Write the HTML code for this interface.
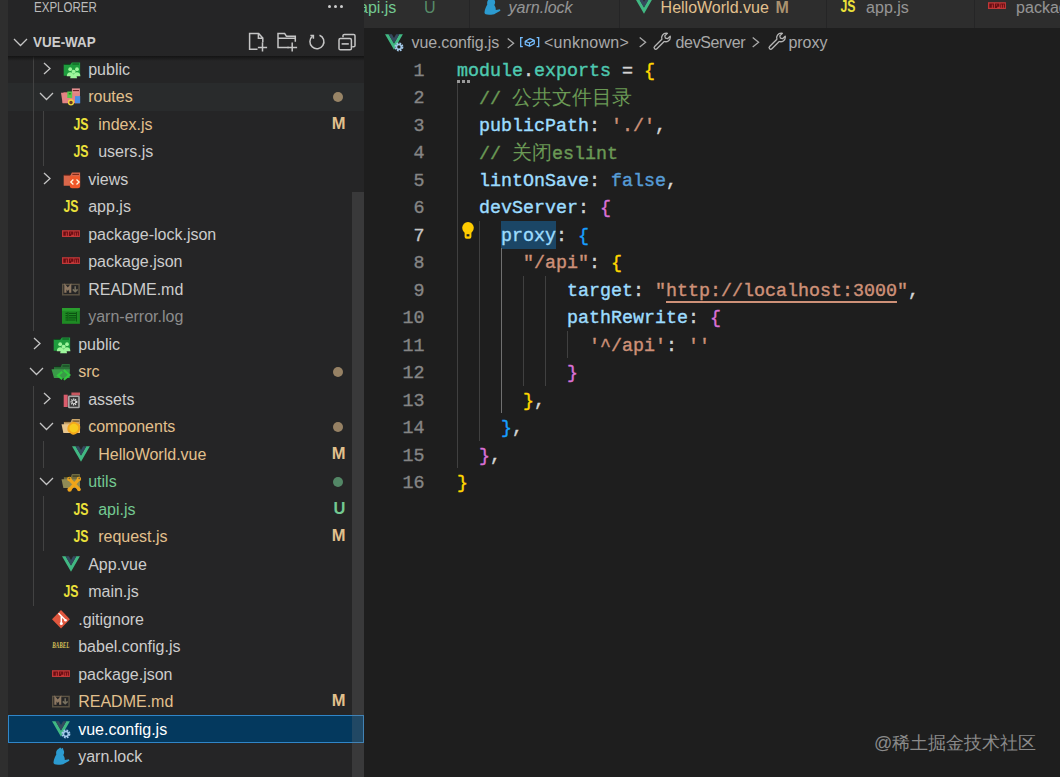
<!DOCTYPE html>
<html><head><meta charset="utf-8">
<style>
*{margin:0;padding:0;box-sizing:border-box}
html,body{width:1060px;height:777px;overflow:hidden;background:#1e1e1e;font-family:"Liberation Sans",sans-serif}
.abs{position:absolute}
#act{left:0;top:0;width:8px;height:777px;background:#2e2e2e}
#side{left:8px;top:0;width:356px;height:777px;background:#252526;overflow:hidden}
.title{left:25.6px;top:-2.4px;font-size:13.75px;color:#bbbbbb;line-height:20px;transform:scaleX(0.84);transform-origin:0 0}
.hdots{left:320.0px;top:4.6px}
.hdots i{position:absolute;top:0;width:3px;height:3px;border-radius:50%;background:#cccccc}
#hdr{left:0;top:28px;width:356px;height:27.5px;background:#252526}
#hdrsh{left:0;top:55.5px;width:356px;height:5px;background:linear-gradient(#141414,rgba(20,20,20,0))}
.hname{left:25.2px;top:0.9px;line-height:27.5px;font-size:14px;font-weight:bold;color:#cccccc;transform:scaleX(0.96);transform-origin:0 0}
.row{position:absolute;left:0;width:356px;height:27.5px;line-height:27.5px;font-size:16px;color:#cccccc;white-space:nowrap}
.row.hov{background:#292b2c}
.row.sel{background:#04395e}
.row.sel::before{content:"";position:absolute;left:0;right:0;top:-0.6px;bottom:-0.3px;border:1.3px solid #3086c8;background:#04395e}
.row.sel .t{color:#ffffff!important}
.row .t{position:absolute;top:0}
.row .b{position:absolute;left:319.5px;top:-0.8px;font-size:16.5px;font-weight:bold;width:18px;text-align:right}
.dot{position:absolute;left:325px;top:8.5px;width:10px;height:10px;border-radius:50%}
.guide{position:absolute;width:1px;background:#585858}
#sbar{left:344px;top:192px;width:12px;height:585px;background:rgba(121,121,121,0.25)}
#editor{left:364px;top:0;width:696px;height:777px;background:#1e1e1e;overflow:hidden}
#tabs{left:0;top:0;width:696px;height:28px;background:#252526}
.tab{position:absolute;top:0;height:28px;background:#2d2d2d;font-size:16px;color:rgba(255,255,255,0.5);white-space:nowrap;overflow:hidden}
.tab .tt{position:absolute;top:-2px;line-height:20px}
#crumbs{left:0;top:29.2px;width:696px;height:27.5px;font-size:16px;color:#a9a9a9;line-height:27.5px;white-space:nowrap}
#crumbs span{position:absolute;top:0}
.ln{position:absolute;left:0;width:60.5px;text-align:right;font-family:"Liberation Mono",monospace;font-size:18.33px;color:#858585;line-height:27.5px;-webkit-text-stroke:0.35px currentColor}
.code{position:absolute;left:93px;font-family:"Liberation Mono",monospace;font-size:18.33px;color:#d4d4d4;white-space:pre;line-height:27.5px;-webkit-text-stroke:0.4px currentColor}
.code u{text-decoration-color:#ce9178;text-underline-offset:5px;text-decoration-thickness:2px;text-decoration-skip-ink:none}
.cjk{font-size:20px;font-weight:300;-webkit-text-stroke:0}
.k{color:#4ec9b0}.p{color:#9cdcfe}.s{color:#ce9178}.c{color:#6a9955}.kw{color:#569cd6}
.b1{color:#ffd700}.b2{color:#da70d6}.b3{color:#179fff}
#wm{left:874px;top:731px;font-size:18px;color:#8a8a8a;white-space:nowrap}
</style></head><body>
<div id="act" class="abs"></div>
<div id="side" class="abs">
  <div class="abs title">EXPLORER</div>
  <div class="abs hdots"><i style="left:0"></i><i style="left:6.1px"></i><i style="left:12.2px"></i></div>
<div class="row" style="top:55.5px"><svg width="9" height="13" viewBox="0 0 9 13" style="position:absolute;left:34.8px;top:6.8px"><path d="M1 1l6 5.5L1 12" fill="none" stroke="#c5c5c5" stroke-width="1.3"/></svg><svg width="20" height="20" viewBox="0 0 20 20" style="position:absolute;left:54px;top:4px;overflow:visible"><path d="M1.7 4.6H8.4L9.9 2.5H18.1V15.8H1.7Z" fill="#1e9c3d"/><path d="M2.2 4.4h6M10.4 4h6.6" stroke="#0b4d1a" stroke-width="0.9"/><g fill="#9df59b"><circle cx="8.2" cy="9.2" r="1.9"/><circle cx="15" cy="9.2" r="1.9"/><circle cx="11.6" cy="11.8" r="2"/><path d="M4.8 16.3c0-2.6 1.5-4 3.4-4s3.4 1.4 3.4 4z"/><path d="M11.6 16.3c0-2.6 1.5-4 3.4-4s3.4 1.4 3.4 4z"/><path d="M8.2 18.3c0-2.6 1.5-4 3.4-4s3.4 1.4 3.4 4z"/></g></svg><span class="t" style="left:80.2px;color:#cccccc">public</span></div>
<div class="row hov" style="top:83.0px"><svg width="15" height="9" viewBox="0 0 15 9" style="position:absolute;left:31.200000000000003px;top:8.8px"><path d="M1 1l6.5 6.5L14 1" fill="none" stroke="#c5c5c5" stroke-width="1.3"/></svg><svg width="20" height="20" viewBox="0 0 20 20" style="position:absolute;left:54px;top:4px;overflow:visible"><path d="M1.5 5.2H9V15.9H0.6Z" fill="#c86a6a"/><path d="M9.9 1.4H17.9V8.5H9.9Z" fill="#e58f8f"/><path d="M10.8 3.6h6.2" stroke="#6a1c22" stroke-width="1.1"/><path d="M-1 5.8H17.9V16.2H0.6Z" fill="#e48383"/><path d="M13 9.1h5.2v7.1H13z" fill="#4b8ee6"/><path d="M5.3 4.5h4.9v6.5H5.3z" fill="#58c84a"/><path d="M6.8 6.8h2" stroke="#2a6a20" stroke-width="1.2"/><circle cx="9" cy="15.4" r="2.4" fill="#6a3a20" stroke="#f2d83a" stroke-width="1.3"/></svg><span class="t" style="left:80.2px;color:#e2c08d">routes</span><span class="dot" style="background:#e2c08d;opacity:.6"></span></div>
<div class="row" style="top:110.5px"><svg width="20" height="20" viewBox="0 0 20 20" style="position:absolute;left:64px;top:4px;overflow:visible"><text x="1.5" y="14.9" font-family="Liberation Sans" font-weight="bold" font-size="15.6" textLength="15" lengthAdjust="spacingAndGlyphs" fill="#ebe13a">JS</text></svg><span class="t" style="left:90.2px;color:#e2c08d">index.js</span><span class="b" style="color:#e2c08d">M</span></div>
<div class="row" style="top:138.0px"><svg width="20" height="20" viewBox="0 0 20 20" style="position:absolute;left:64px;top:4px;overflow:visible"><text x="1.5" y="14.9" font-family="Liberation Sans" font-weight="bold" font-size="15.6" textLength="15" lengthAdjust="spacingAndGlyphs" fill="#ebe13a">JS</text></svg><span class="t" style="left:90.2px;color:#cccccc">users.js</span></div>
<div class="row" style="top:165.5px"><svg width="9" height="13" viewBox="0 0 9 13" style="position:absolute;left:34.8px;top:6.8px"><path d="M1 1l6 5.5L1 12" fill="none" stroke="#c5c5c5" stroke-width="1.3"/></svg><svg width="20" height="20" viewBox="0 0 20 20" style="position:absolute;left:54px;top:4px;overflow:visible"><path d="M1.7 5.3H8.4L9.9 2.5H18.1V15.8H1.7Z" fill="#d9674a"/><path d="M2.2 5h6M10.4 4.4h6.6" stroke="#6a1c10" stroke-width="0.9"/><path d="M7.9 6.2H18.1V16.3Q18.1 18.3 16 18.3H10Q7.9 18.3 7.9 16.3Z" fill="#f0582a"/><path d="M11.4 9.6l-2.6 2.4 2.6 2.4M14.5 9.6l2.6 2.4-2.6 2.4" stroke="#fff8e0" stroke-width="1.3" fill="none"/></svg><span class="t" style="left:80.2px;color:#cccccc">views</span></div>
<div class="row" style="top:193.0px"><svg width="20" height="20" viewBox="0 0 20 20" style="position:absolute;left:54px;top:4px;overflow:visible"><text x="1.5" y="14.9" font-family="Liberation Sans" font-weight="bold" font-size="15.6" textLength="15" lengthAdjust="spacingAndGlyphs" fill="#ebe13a">JS</text></svg><span class="t" style="left:80.2px;color:#cccccc">app.js</span></div>
<div class="row" style="top:220.5px"><svg width="20" height="20" viewBox="0 0 20 20" style="position:absolute;left:54px;top:4px;overflow:visible"><rect x="0" y="5.2" width="17.9" height="6.8" fill="#c13838"/><path d="M1.3 6.4h4.6v4.4H4.8V7.5H3.8v3.3H1.3zM6.9 6.4h4.5v3.3H9.2v1.3H6.9zM8.1 7.5v1.1h1.1V7.5zM12.3 6.4h4.6v4.4h-1.1V7.5h-0.9v3.3h-1V7.5h-0.8v3.3h-0.8z" fill="#6a0d12"/></svg><span class="t" style="left:80.2px;color:#cccccc">package-lock.json</span></div>
<div class="row" style="top:248.0px"><svg width="20" height="20" viewBox="0 0 20 20" style="position:absolute;left:54px;top:4px;overflow:visible"><rect x="0" y="5.2" width="17.9" height="6.8" fill="#c13838"/><path d="M1.3 6.4h4.6v4.4H4.8V7.5H3.8v3.3H1.3zM6.9 6.4h4.5v3.3H9.2v1.3H6.9zM8.1 7.5v1.1h1.1V7.5zM12.3 6.4h4.6v4.4h-1.1V7.5h-0.9v3.3h-1V7.5h-0.8v3.3h-0.8z" fill="#6a0d12"/></svg><span class="t" style="left:80.2px;color:#cccccc">package.json</span></div>
<div class="row" style="top:275.5px"><svg width="20" height="20" viewBox="0 0 20 20" style="position:absolute;left:54px;top:4px;overflow:visible"><rect x="0.7" y="4.4" width="16.4" height="10.4" fill="none" stroke="#5d5444" stroke-width="1.4"/><path d="M3.4 12.8V6.3l2.4 3 2.4-3v6.5" stroke="#8d7862" stroke-width="2.2" fill="none"/><path d="M13.2 6.2v5.6M10.8 9.4l2.4 2.4 2.4-2.4" stroke="#77705f" stroke-width="1.5" fill="none"/></svg><span class="t" style="left:80.2px;color:#cccccc">README.md</span></div>
<div class="row" style="top:303.0px"><svg width="20" height="20" viewBox="0 0 20 20" style="position:absolute;left:54px;top:4px;overflow:visible"><rect x="0" y="1" width="17.9" height="15.8" fill="#1f8a24"/><rect x="0" y="1" width="17.9" height="2.8" fill="#2a9e2e"/><path d="M3.5 6.4h2M7 6.4h7M3.5 8.6h2M7 8.6h7M3.5 10.8h2M7 10.8h7.5M3.5 13h2M7 13h6.5" stroke="#0a5510" stroke-width="1.2"/><path d="M6 5v9M14.5 5v9.5" stroke="#0a4a10" stroke-width="0.8"/></svg><span class="t" style="left:80.2px;color:#8c8c8c">yarn-error.log</span></div>
<div class="row" style="top:330.5px"><svg width="9" height="13" viewBox="0 0 9 13" style="position:absolute;left:24.799999999999997px;top:6.8px"><path d="M1 1l6 5.5L1 12" fill="none" stroke="#c5c5c5" stroke-width="1.3"/></svg><svg width="20" height="20" viewBox="0 0 20 20" style="position:absolute;left:44px;top:4px;overflow:visible"><path d="M1.7 4.6H8.4L9.9 2.5H18.1V15.8H1.7Z" fill="#1e9c3d"/><path d="M2.2 4.4h6M10.4 4h6.6" stroke="#0b4d1a" stroke-width="0.9"/><g fill="#9df59b"><circle cx="8.2" cy="9.2" r="1.9"/><circle cx="15" cy="9.2" r="1.9"/><circle cx="11.6" cy="11.8" r="2"/><path d="M4.8 16.3c0-2.6 1.5-4 3.4-4s3.4 1.4 3.4 4z"/><path d="M11.6 16.3c0-2.6 1.5-4 3.4-4s3.4 1.4 3.4 4z"/><path d="M8.2 18.3c0-2.6 1.5-4 3.4-4s3.4 1.4 3.4 4z"/></g></svg><span class="t" style="left:70.2px;color:#cccccc">public</span></div>
<div class="row" style="top:358.0px"><svg width="15" height="9" viewBox="0 0 15 9" style="position:absolute;left:21.2px;top:8.8px"><path d="M1 1l6.5 6.5L14 1" fill="none" stroke="#c5c5c5" stroke-width="1.3"/></svg><svg width="20" height="20" viewBox="0 0 20 20" style="position:absolute;left:44px;top:4px;overflow:visible"><path d="M2 5.1H8.6L10 2H17.8V15.9H2Z" fill="#2c6e38"/><path d="M2.5 4.7h6M10.6 4h6.6" stroke="#0b3d18" stroke-width="0.9"/><path d="M-0.5 7.3H17.8L17.3 15.9H2Z" fill="#3a9a48"/><path d="M10.2 9.8l-4.3 3.7 4.3 3.7M11.8 8l5.6 4.9-5.6 4.9" stroke="#33c93f" stroke-width="2.1" fill="none"/></svg><span class="t" style="left:70.2px;color:#e2c08d">src</span><span class="dot" style="background:#e2c08d;opacity:.6"></span></div>
<div class="row" style="top:385.5px"><svg width="9" height="13" viewBox="0 0 9 13" style="position:absolute;left:34.8px;top:6.8px"><path d="M1 1l6 5.5L1 12" fill="none" stroke="#c5c5c5" stroke-width="1.3"/></svg><svg width="20" height="20" viewBox="0 0 20 20" style="position:absolute;left:54px;top:4px;overflow:visible"><path d="M1.7 4.7h4v12.3h-4z" fill="#d95c6c"/><path d="M9.4 2.5H18V5.5H9.4z" fill="#c8575f"/><rect x="6.8" y="6.3" width="10.2" height="11.2" rx="0.6" fill="#3a3a3a" stroke="#a9a9a9" stroke-width="1.6"/><circle cx="11.9" cy="11.9" r="2.8" fill="none" stroke="#e0e0e0" stroke-width="1.4" stroke-dasharray="1.2 0.8"/><circle cx="11.9" cy="11.9" r="1.9" fill="none" stroke="#e0e0e0" stroke-width="1"/></svg><span class="t" style="left:80.2px;color:#cccccc">assets</span></div>
<div class="row" style="top:413.0px"><svg width="15" height="9" viewBox="0 0 15 9" style="position:absolute;left:31.200000000000003px;top:8.8px"><path d="M1 1l6.5 6.5L14 1" fill="none" stroke="#c5c5c5" stroke-width="1.3"/></svg><svg width="20" height="20" viewBox="0 0 20 20" style="position:absolute;left:54px;top:4px;overflow:visible"><path d="M1.9 5.1H8.6L10 2H17.9V15.9H1.9Z" fill="#c9a56a"/><path d="M2.4 4.8h6M10.6 4.1h6.6" stroke="#4a3010" stroke-width="0.9"/><path d="M-0.5 7.3H17.9V15.9H1.4Z" fill="#e8c68e"/><path d="M11.5 4.8C13.5 4.8 14.5 6.2 16 6.5 17.8 7 18.4 9 18.2 11 18 13.5 17.2 15.5 15 16.2 13.5 16.8 12.8 17.9 11.3 17.7 9.5 17.5 8.5 16 7 15.2 5.5 14.3 5.2 12.8 5.4 11 5.6 8.8 6.8 7.6 8.3 6.6 9.5 5.6 10.3 4.8 11.5 4.8Z" fill="#f4a81c"/><path d="M11.8 6.8C14 6.8 16.2 8.6 16.2 11 16.2 13.6 14 15.4 11.6 15.4 9.2 15.4 7.4 13.5 7.4 11.1 7.4 8.7 9.5 6.8 11.8 6.8Z" fill="#f7cc1e"/></svg><span class="t" style="left:80.2px;color:#e2c08d">components</span><span class="dot" style="background:#e2c08d;opacity:.6"></span></div>
<div class="row" style="top:440.5px"><svg width="20" height="20" viewBox="0 0 20 20" style="position:absolute;left:64px;top:4px;overflow:visible"><path d="M0 1.2H3.6L9 10.6 14.3 1.2H17.9L9 16.7Z" fill="#41b883"/><path d="M3.6 1.2H6.9L9 4.9 11.1 1.2H14.3L9 10.6Z" fill="#35495e"/></svg><span class="t" style="left:90.2px;color:#e2c08d">HelloWorld.vue</span><span class="b" style="color:#e2c08d">M</span></div>
<div class="row" style="top:468.0px"><svg width="15" height="9" viewBox="0 0 15 9" style="position:absolute;left:31.200000000000003px;top:8.8px"><path d="M1 1l6.5 6.5L14 1" fill="none" stroke="#c5c5c5" stroke-width="1.3"/></svg><svg width="20" height="20" viewBox="0 0 20 20" style="position:absolute;left:54px;top:4px;overflow:visible"><path d="M1.9 5.1H8.6L10 2H17.9V15.9H1.9Z" fill="#6f6a40"/><path d="M2.4 4.8h6M10.6 4.1h6.6" stroke="#2a2a10" stroke-width="0.9"/><path d="M-0.5 7.3H17.9V15.9H1.4Z" fill="#8f8a55"/><path d="M7.6 7.4l9.6 10M16.8 7.2L7.8 17.4" stroke="#f0a51a" stroke-width="3.2"/><circle cx="7.4" cy="7" r="2.3" fill="#f0a51a"/><circle cx="16.9" cy="6.9" r="2.2" fill="#f0a51a"/><circle cx="7.6" cy="17.5" r="2.2" fill="#f0a51a"/><circle cx="17" cy="17.5" r="1.8" fill="#f0a51a"/><circle cx="7.4" cy="6.3" r="0.9" fill="#6f6a40"/><circle cx="17.2" cy="6.3" r="0.9" fill="#6f6a40"/></svg><span class="t" style="left:80.2px;color:#73c991">utils</span><span class="dot" style="background:#73c991;opacity:.6"></span></div>
<div class="row" style="top:495.5px"><svg width="20" height="20" viewBox="0 0 20 20" style="position:absolute;left:64px;top:4px;overflow:visible"><text x="1.5" y="14.9" font-family="Liberation Sans" font-weight="bold" font-size="15.6" textLength="15" lengthAdjust="spacingAndGlyphs" fill="#ebe13a">JS</text></svg><span class="t" style="left:90.2px;color:#73c991">api.js</span><span class="b" style="color:#73c991">U</span></div>
<div class="row" style="top:523.0px"><svg width="20" height="20" viewBox="0 0 20 20" style="position:absolute;left:64px;top:4px;overflow:visible"><text x="1.5" y="14.9" font-family="Liberation Sans" font-weight="bold" font-size="15.6" textLength="15" lengthAdjust="spacingAndGlyphs" fill="#ebe13a">JS</text></svg><span class="t" style="left:90.2px;color:#e2c08d">request.js</span><span class="b" style="color:#e2c08d">M</span></div>
<div class="row" style="top:550.5px"><svg width="20" height="20" viewBox="0 0 20 20" style="position:absolute;left:54px;top:4px;overflow:visible"><path d="M0 1.2H3.6L9 10.6 14.3 1.2H17.9L9 16.7Z" fill="#41b883"/><path d="M3.6 1.2H6.9L9 4.9 11.1 1.2H14.3L9 10.6Z" fill="#35495e"/></svg><span class="t" style="left:80.2px;color:#cccccc">App.vue</span></div>
<div class="row" style="top:578.0px"><svg width="20" height="20" viewBox="0 0 20 20" style="position:absolute;left:54px;top:4px;overflow:visible"><text x="1.5" y="14.9" font-family="Liberation Sans" font-weight="bold" font-size="15.6" textLength="15" lengthAdjust="spacingAndGlyphs" fill="#ebe13a">JS</text></svg><span class="t" style="left:80.2px;color:#cccccc">main.js</span></div>
<div class="row" style="top:605.5px"><svg width="20" height="20" viewBox="0 0 20 20" style="position:absolute;left:44px;top:4px;overflow:visible"><path d="M9 0L17.9 9.3 9 18.5 0 9.3Z" fill="#e0573e"/><path d="M6.5 3.2L13.5 10.3M9.3 6v7.5" stroke="#fff" stroke-width="1.5" fill="none"/><circle cx="13.5" cy="10.3" r="1.3" fill="#fff"/><circle cx="9.3" cy="13.5" r="1.5" fill="#fff"/></svg><span class="t" style="left:70.2px;color:#cccccc">.gitignore</span></div>
<div class="row" style="top:633.0px"><svg width="20" height="20" viewBox="0 0 20 20" style="position:absolute;left:44px;top:4px;overflow:visible"><text x="0.3" y="11.3" font-family="Liberation Serif" font-style="italic" font-weight="bold" font-size="8" textLength="17" lengthAdjust="spacingAndGlyphs" fill="#d5c25a">BABEL</text></svg><span class="t" style="left:70.2px;color:#cccccc">babel.config.js</span></div>
<div class="row" style="top:660.5px"><svg width="20" height="20" viewBox="0 0 20 20" style="position:absolute;left:44px;top:4px;overflow:visible"><rect x="0" y="5.2" width="17.9" height="6.8" fill="#c13838"/><path d="M1.3 6.4h4.6v4.4H4.8V7.5H3.8v3.3H1.3zM6.9 6.4h4.5v3.3H9.2v1.3H6.9zM8.1 7.5v1.1h1.1V7.5zM12.3 6.4h4.6v4.4h-1.1V7.5h-0.9v3.3h-1V7.5h-0.8v3.3h-0.8z" fill="#6a0d12"/></svg><span class="t" style="left:70.2px;color:#cccccc">package.json</span></div>
<div class="row" style="top:688.0px"><svg width="20" height="20" viewBox="0 0 20 20" style="position:absolute;left:44px;top:4px;overflow:visible"><rect x="0.7" y="4.4" width="16.4" height="10.4" fill="none" stroke="#5d5444" stroke-width="1.4"/><path d="M3.4 12.8V6.3l2.4 3 2.4-3v6.5" stroke="#8d7862" stroke-width="2.2" fill="none"/><path d="M13.2 6.2v5.6M10.8 9.4l2.4 2.4 2.4-2.4" stroke="#77705f" stroke-width="1.5" fill="none"/></svg><span class="t" style="left:70.2px;color:#e2c08d">README.md</span><span class="b" style="color:#e2c08d">M</span></div>
<div class="row sel" style="top:715.5px"><svg width="20" height="20" viewBox="0 0 20 20" style="position:absolute;left:44px;top:4px;overflow:visible"><path d="M0 1.2H3.6L9 10.6 14.3 1.2H17.9L9 16.7Z" fill="#41b883"/><path d="M3.6 1.2H6.9L9 4.9 11.1 1.2H14.3L9 10.6Z" fill="#35495e"/><g transform="translate(13.9 13.9)"><circle r="3.3" fill="none" stroke="#a3c8e8" stroke-width="2.4" stroke-dasharray="1.6 1.0"/><circle r="2.4" fill="none" stroke="#a3c8e8" stroke-width="1.5"/></g></svg><span class="t" style="left:70.2px;color:#cccccc">vue.config.js</span></div>
<div class="row" style="top:743.0px"><svg width="20" height="20" viewBox="0 0 20 20" style="position:absolute;left:44px;top:4px;overflow:visible"><path d="M8.2 0.4L9.6 1.7 10.9 0.7 11.4 3C12.5 4.5 12.3 6.5 11.3 8C12.3 9.5 12.8 11 12.8 12.9L17 12.3 17.4 13.7 12.4 16.4C11 17.4 9 17.8 6 17.8C3 17.8 1.3 17 1.5 15.3C1.8 12 3.2 9.5 4.3 7.5C3.8 5.5 4.3 3 6.3 2Z" fill="#2c9bd0"/></svg><span class="t" style="left:70.2px;color:#cccccc">yarn.lock</span></div>
<div class="guide" style="left:25px;top:28.0px;height:302.5px;background:#424242"></div>
<div class="guide" style="left:25px;top:385.5px;height:220.0px;background:#424242"></div>
<div class="guide" style="left:35px;top:110.5px;height:55.0px;background:#424242"></div>
<div class="guide" style="left:35px;top:440.5px;height:27.5px;background:#424242"></div>
<div class="guide" style="left:35px;top:495.5px;height:55.0px;background:#424242"></div>
  <div id="sbar" class="abs"></div>
  <div id="hdr" class="abs">
    <svg width="15" height="9" viewBox="0 0 15 9" style="position:absolute;left:5px;top:9.5px"><path d="M1 1l6.5 6.5L14 1" fill="none" stroke="#c5c5c5" stroke-width="1.3"/></svg>
    <div class="abs hname">VUE-WAP</div>
    <svg class="abs" style="left:240px;top:4px;overflow:visible" width="20" height="20" viewBox="0 0 20 20"><path d="M9.5 17.2H1.6V1.5H10.7L14.8 6V10.2M10.4 1.7V6.2H14.6" fill="none" stroke="#c5c5c5" stroke-width="1.5"/><path d="M9.9 15.4H19.1M14.5 10.2V19.6" stroke="#c5c5c5" stroke-width="1.5"/></svg>
    <svg class="abs" style="left:268px;top:4px;overflow:visible" width="20" height="20" viewBox="0 0 20 20"><path d="M12.8 15.6H2V1.4H8.6L10.4 4.2H19.3V9.8M2 6.2H19.3" fill="none" stroke="#c5c5c5" stroke-width="1.5"/><path d="M11.3 15.6H21.1M16.2 10.6V19.6" stroke="#c5c5c5" stroke-width="1.5"/></svg>
    <svg class="abs" style="left:299px;top:4px;overflow:visible" width="20" height="20" viewBox="0 0 20 20"><path d="M5.6 4.2A7 7 0 1 0 12.5 3.2" fill="none" stroke="#c5c5c5" stroke-width="1.5"/><path d="M3.4 3.6H6.4V6.8" fill="none" stroke="#c5c5c5" stroke-width="1.5"/></svg>
    <svg class="abs" style="left:329px;top:4px;overflow:visible" width="20" height="20" viewBox="0 0 20 20"><path d="M6 5.2V3.8A1.4 1.4 0 0 1 7.4 2.4H16.6A1.4 1.4 0 0 1 18 3.8V13.4A1.4 1.4 0 0 1 16.6 14.8H15.2" fill="none" stroke="#c5c5c5" stroke-width="1.5"/><rect x="2" y="6.6" width="12.4" height="11.2" rx="1.4" fill="none" stroke="#c5c5c5" stroke-width="1.5"/><path d="M4.6 11.9H11.8" stroke="#c5c5c5" stroke-width="1.6"/></svg>
  </div>
  <div id="hdrsh" class="abs"></div>
</div>
<div id="editor" class="abs">
  <div id="tabs" class="abs">
    <div class="tab" style="left:-40px;width:145.6px;border-right:1px solid #252526"><span class="tt" style="left:35px;color:#73c991">api.js</span><span class="tt" style="left:100px;color:rgba(115,201,145,0.62)">U</span></div>
    <div class="tab" style="left:105.6px;width:150px;border-right:1px solid #252526"><svg width="20" height="20" viewBox="0 0 20 20" style="position:absolute;left:13.399999999999977px;top:-3px;overflow:visible"><path d="M8.2 0.4L9.6 1.7 10.9 0.7 11.4 3C12.5 4.5 12.3 6.5 11.3 8C12.3 9.5 12.8 11 12.8 12.9L17 12.3 17.4 13.7 12.4 16.4C11 17.4 9 17.8 6 17.8C3 17.8 1.3 17 1.5 15.3C1.8 12 3.2 9.5 4.3 7.5C3.8 5.5 4.3 3 6.3 2Z" fill="#2c9bd0"/></svg><span class="tt" style="left:39px;font-style:italic">yarn.lock</span></div>
    <div class="tab" style="left:255.6px;width:207px;border-right:1px solid #252526"><svg width="20" height="20" viewBox="0 0 20 20" style="position:absolute;left:15.100000000000023px;top:-3px;overflow:visible"><path d="M0 1.2H3.6L9 10.6 14.3 1.2H17.9L9 16.7Z" fill="#41b883"/><path d="M3.6 1.2H6.9L9 4.9 11.1 1.2H14.3L9 10.6Z" fill="#35495e"/></svg><span class="tt" style="left:41px;color:#e2c08d">HelloWorld.vue</span><span class="tt" style="left:156px;color:rgba(226,192,141,0.7);font-weight:bold;font-size:16px">M</span></div>
    <div class="tab" style="left:462.6px;width:148.5px;border-right:1px solid #252526"><svg width="20" height="20" viewBox="0 0 20 20" style="position:absolute;left:12.899999999999977px;top:-3px;overflow:visible"><text x="1.5" y="14.9" font-family="Liberation Sans" font-weight="bold" font-size="15.6" textLength="15" lengthAdjust="spacingAndGlyphs" fill="#ebe13a">JS</text></svg><span class="tt" style="left:39.5px">app.js</span></div>
    <div class="tab" style="left:611.1px;width:120px"><svg width="20" height="20" viewBox="0 0 20 20" style="position:absolute;left:12.899999999999977px;top:-3px;overflow:visible"><rect x="0" y="5.2" width="17.9" height="6.8" fill="#c13838"/><path d="M1.3 6.4h4.6v4.4H4.8V7.5H3.8v3.3H1.3zM6.9 6.4h4.5v3.3H9.2v1.3H6.9zM8.1 7.5v1.1h1.1V7.5zM12.3 6.4h4.6v4.4h-1.1V7.5h-0.9v3.3h-1V7.5h-0.8v3.3h-0.8z" fill="#6a0d12"/></svg><span class="tt" style="left:41px">package.json</span></div>
  </div>
  <div id="crumbs" class="abs">
    <span style="left:47.5px;letter-spacing:-0.1px">vue.config.js</span>
    <span style="left:180px;letter-spacing:0.26px">&lt;unknown&gt;</span>
    <span style="left:311.6px;letter-spacing:-0.38px">devServer</span>
    <span style="left:424.4px">proxy</span>
  </div>
  <svg class="abs" style="left:142.7px;top:37.6px;overflow:visible" width="8" height="11" viewBox="0 0 8 11"><path d="M0.7 0.5L6.6 5.3 0.7 10.1" fill="none" stroke="#a9a9a9" stroke-width="1.3"/></svg><svg class="abs" style="left:274.9px;top:37.2px;overflow:visible" width="8" height="11" viewBox="0 0 8 11"><path d="M0.7 0.5L6.6 5.3 0.7 10.1" fill="none" stroke="#a9a9a9" stroke-width="1.3"/></svg><svg class="abs" style="left:387.8px;top:37.2px;overflow:visible" width="8" height="11" viewBox="0 0 8 11"><path d="M0.7 0.5L6.6 5.3 0.7 10.1" fill="none" stroke="#a9a9a9" stroke-width="1.3"/></svg>
  <svg class="abs" style="left:156.3px;top:36.8px;overflow:visible" width="20" height="11" viewBox="0 0 20 11"><path d="M2.8 0.7H0.7V9.7H2.8M16.6 0.7H18.7V9.7H16.6" fill="none" stroke="#75beff" stroke-width="1.3"/><path d="M5.2 4.2L10 1.6 14.3 3.4V6.6L9.5 9.2 5.2 7.4Z M5.2 4.2L9.5 6 14.3 3.4M9.5 6V9.2" fill="none" stroke="#75beff" stroke-width="1.2" stroke-linejoin="round"/></svg>
  <svg class="abs" style="left:288.8px;top:32px;overflow:visible" width="19" height="18" viewBox="0 0 19 18"><path d="M13.2 1.1a4.6 4.6 0 0 0-4.3 6.1L1.6 14.5a1.6 1.6 0 0 0 2.3 2.3l7.3-7.3a4.6 4.6 0 0 0 6.1-4.3l-0.1-1.1-2.6 2.6-2.2-0.6-0.6-2.2 2.6-2.6z" fill="none" stroke="#b5b5b5" stroke-width="1.3" stroke-linejoin="round"/></svg><svg class="abs" style="left:403.7px;top:32px;overflow:visible" width="19" height="18" viewBox="0 0 19 18"><path d="M13.2 1.1a4.6 4.6 0 0 0-4.3 6.1L1.6 14.5a1.6 1.6 0 0 0 2.3 2.3l7.3-7.3a4.6 4.6 0 0 0 6.1-4.3l-0.1-1.1-2.6 2.6-2.2-0.6-0.6-2.2 2.6-2.6z" fill="none" stroke="#b5b5b5" stroke-width="1.3" stroke-linejoin="round"/></svg>
  <svg width="20" height="20" viewBox="0 0 20 20" style="position:absolute;left:20.80000000000001px;top:33.2px;overflow:visible"><path d="M0 1.2H3.6L9 10.6 14.3 1.2H17.9L9 16.7Z" fill="#41b883"/><path d="M3.6 1.2H6.9L9 4.9 11.1 1.2H14.3L9 10.6Z" fill="#35495e"/><g transform="translate(13.9 13.9)"><circle r="3.3" fill="none" stroke="#a3c8e8" stroke-width="2.4" stroke-dasharray="1.6 1.0"/><circle r="2.4" fill="none" stroke="#a3c8e8" stroke-width="1.5"/></g></svg>
<div class="abs" style="left:137px;top:220.8px;width:55px;height:28px;background:#1b4666"></div>
  <div class="abs" style="left:93px;top:80px;width:2.6px;height:2.6px;background:#9a9a9a"></div>
  <div class="abs" style="left:98.2px;top:80px;width:2.6px;height:2.6px;background:#9a9a9a"></div>
  <div class="abs" style="left:103.4px;top:80px;width:2.6px;height:2.6px;background:#9a9a9a"></div>
  <svg class="abs" style="left:98px;top:222px;overflow:visible" width="12" height="17" viewBox="0 0 12 17"><circle cx="6" cy="5.8" r="5.8" fill="#ffcc00"/><path d="M2.6 9.5h6.8v5.2a2 2 0 0 1-2 2h-2.8a2 2 0 0 1-2-2z" fill="#ffcc00"/><rect x="4.6" y="12.2" width="2.8" height="2.2" fill="#1e1e1e"/></svg>
<div class="guide" style="left:93.0px;top:83.0px;height:385.0px;background:#404040"></div>
<div class="guide" style="left:115.0px;top:220.5px;height:220.0px;background:#404040"></div>
<div class="guide" style="left:137.0px;top:248.0px;height:165.0px;background:#707070"></div>
<div class="guide" style="left:159.0px;top:275.5px;height:110.0px;background:#404040"></div>
<div class="guide" style="left:181.0px;top:275.5px;height:110.0px;background:#404040"></div>
<div class="guide" style="left:203.0px;top:330.5px;height:27.5px;background:#404040"></div>
<div class="ln" style="top:57.5px;"><span>1</span></div>
<div class="code" style="top:57.5px"><span class="k">module</span>.<span class="k">exports</span> = <span class="b1">{</span></div>
<div class="ln" style="top:85.0px;"><span>2</span></div>
<div class="code" style="top:85.0px">  <span class="c">// <span class="cjk">公共文件目录</span></span></div>
<div class="ln" style="top:112.5px;"><span>3</span></div>
<div class="code" style="top:112.5px">  <span class="p">publicPath</span>: <span class="s">'./'</span>,</div>
<div class="ln" style="top:140.0px;"><span>4</span></div>
<div class="code" style="top:140.0px">  <span class="c">// <span class="cjk">关闭</span>eslint</span></div>
<div class="ln" style="top:167.5px;"><span>5</span></div>
<div class="code" style="top:167.5px">  <span class="p">lintOnSave</span>: <span class="kw">false</span>,</div>
<div class="ln" style="top:195.0px;"><span>6</span></div>
<div class="code" style="top:195.0px">  <span class="p">devServer</span>: <span class="b2">{</span></div>
<div class="ln" style="top:222.5px;"><span style="color:#c6c6c6">7</span></div>
<div class="code" style="top:222.5px">    <span class="p">proxy</span>: <span class="b3">{</span></div>
<div class="ln" style="top:250.0px;"><span>8</span></div>
<div class="code" style="top:250.0px">      <span class="s">"/api"</span>: <span class="b1">{</span></div>
<div class="ln" style="top:277.5px;"><span>9</span></div>
<div class="code" style="top:277.5px">          <span class="p">target</span>: <span class="s">"<u>http://localhost:3000</u>"</span>,</div>
<div class="ln" style="top:305.0px;"><span>10</span></div>
<div class="code" style="top:305.0px">          <span class="p">pathRewrite</span>: <span class="b2">{</span></div>
<div class="ln" style="top:332.5px;"><span>11</span></div>
<div class="code" style="top:332.5px">            <span class="s">'^/api'</span>: <span class="s">''</span></div>
<div class="ln" style="top:360.0px;"><span>12</span></div>
<div class="code" style="top:360.0px">          <span class="b2">}</span></div>
<div class="ln" style="top:387.5px;"><span>13</span></div>
<div class="code" style="top:387.5px">      <span class="b1">}</span>,</div>
<div class="ln" style="top:415.0px;"><span>14</span></div>
<div class="code" style="top:415.0px">    <span class="b3">}</span>,</div>
<div class="ln" style="top:442.5px;"><span>15</span></div>
<div class="code" style="top:442.5px">  <span class="b2">}</span>,</div>
<div class="ln" style="top:470.0px;"><span>16</span></div>
<div class="code" style="top:470.0px"><span class="b1">}</span></div>
</div>
<div id="wm" class="abs">@稀土掘金技术社区</div>
</body></html>
